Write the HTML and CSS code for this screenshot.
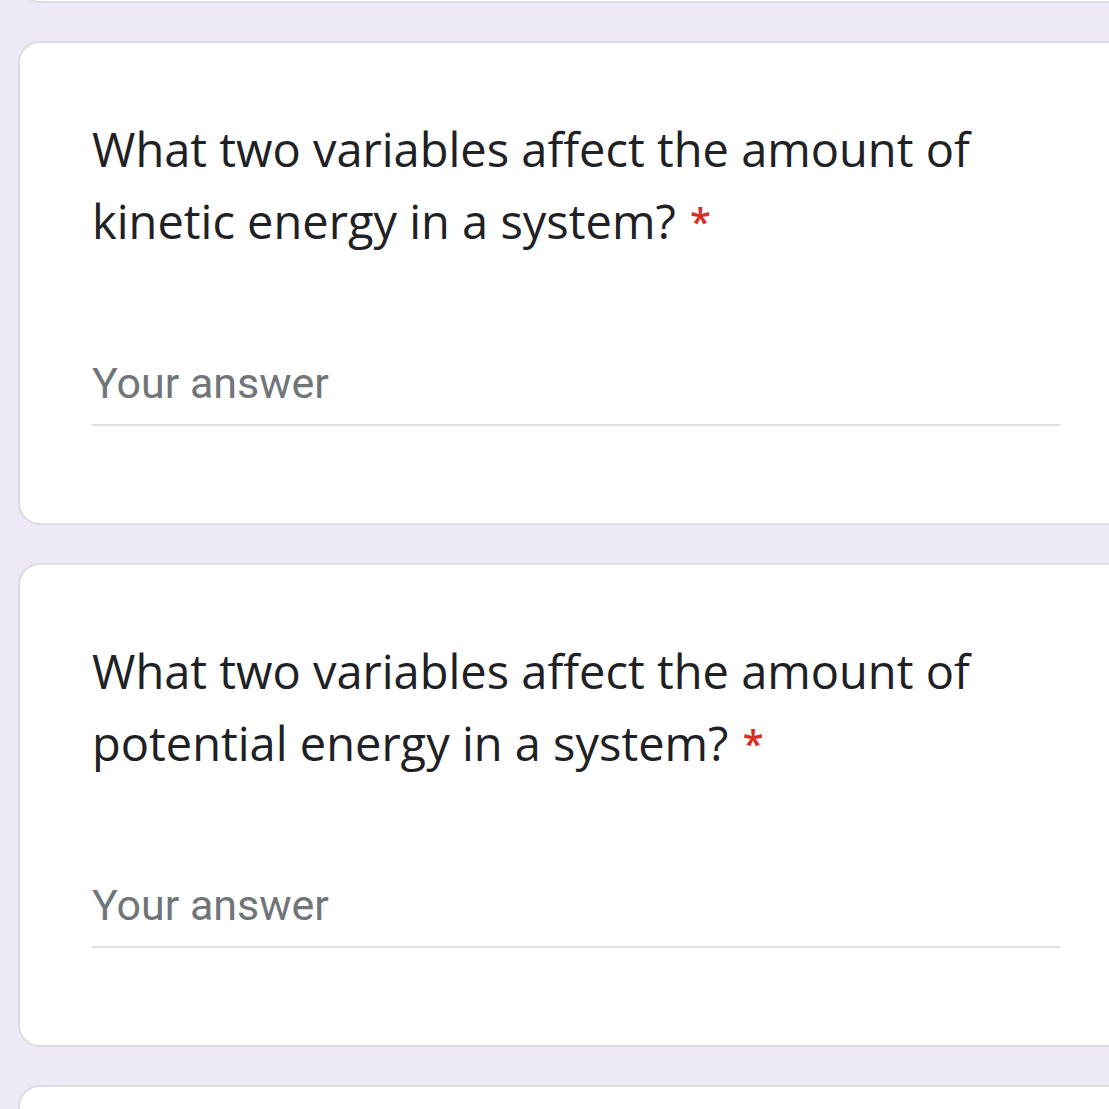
FILE: index.html
```html
<!DOCTYPE html>
<html lang="en">
<head>
<meta charset="utf-8">
<title>Form</title>
<link rel="stylesheet" href="styles.css">
</head>
<body>
<div class="page">
  <div class="card card-prev"></div>
  <div class="card">
    <div class="question">What two variables affect the amount of kinetic energy in a system? <span class="req">*</span></div>
    <div class="answer">Your answer</div>
  </div>
  <div class="card">
    <div class="question">What two variables affect the amount of potential energy in a system? <span class="req">*</span></div>
    <div class="answer">Your answer</div>
  </div>
  <div class="card card-next"></div>
</div>
</body>
</html>
```

FILE: styles.css
```css
html, body {
  margin: 0;
  padding: 0;
  background: #ede9f6;
  overflow: hidden;
  height: 1109px;
}
.page {
  display: flex;
  flex-direction: column;
  gap: 38px;
  padding-left: 18px;
}
.card {
  width: 1140px;
  height: 484px;
  box-sizing: border-box;
  background: #fff;
  border: 2px solid #dadce0;
  border-radius: 22px;
  padding: 0 0 0 72px;
  flex: none;
}
.card-prev {
  margin-top: -481px;
}
.question {
  font-family: "Open Sans", sans-serif;
  font-size: 47px;
  line-height: 72px;
  color: #202124;
  width: 900px;
  padding-top: 70px;
}
.req {
  color: #d93025;
  font-size: 38px;
  line-height: 1;
  font-weight: 600;
  margin-left: 2px;
  vertical-align: 3px;
}
.answer {
  font-family: Roboto, sans-serif;
  font-size: 43px;
  line-height: 50px;
  color: #70757a;
  width: 968px;
  margin-top: 101px;
  padding-bottom: 16px;
  border-bottom: 2px solid #e0e0e0;
}
```
